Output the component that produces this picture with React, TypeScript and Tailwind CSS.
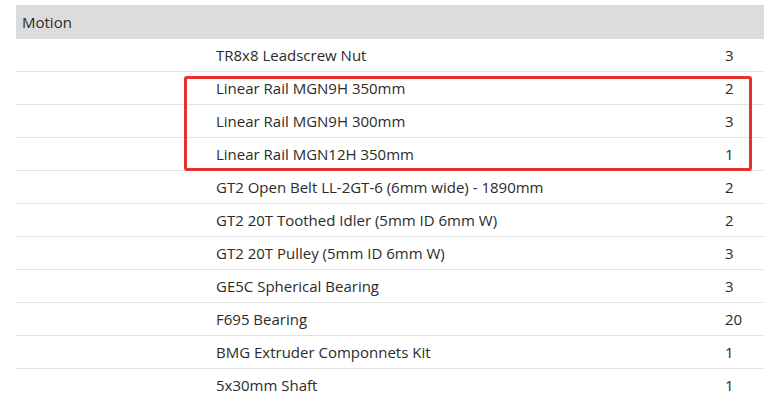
const items: [string, number][] = [
  ["TR8x8 Leadscrew Nut", 3],
  ["Linear Rail MGN9H 350mm", 2],
  ["Linear Rail MGN9H 300mm", 3],
  ["Linear Rail MGN12H 350mm", 1],
  ["GT2 Open Belt LL-2GT-6 (6mm wide) - 1890mm", 2],
  ["GT2 20T Toothed Idler (5mm ID 6mm W)", 2],
  ["GT2 20T Pulley (5mm ID 6mm W)", 3],
  ["GE5C Spherical Bearing", 3],
  ["F695 Bearing", 20],
  ["BMG Extruder Componnets Kit", 1],
  ["5x30mm Shaft", 1],
];

const App = () => (
  <div className="h-[400px] w-[764px] overflow-hidden bg-white pt-[5px] pl-4 font-['Open_Sans',sans-serif] text-[15px] text-[#2b2b2b]">
    <div className="relative">
      <div className="flex h-[34px] items-center bg-[#dcdcdc] px-[6px]">Motion</div>
      {items.map(([name, qty]) => (
        <div key={name} className="grid h-[33px] grid-cols-[184px_509px_1fr] items-center border-b border-[#e2e2e2]">
          <div />
          <div className="pl-4">{name}</div>
          <div className="pl-4">{qty}</div>
        </div>
      ))}
      <div className="absolute left-[168px] top-[71px] h-[95px] w-[568px] rounded-[3px] border-[3px] border-[#e5302c]" />
    </div>
  </div>
);

export default App;
